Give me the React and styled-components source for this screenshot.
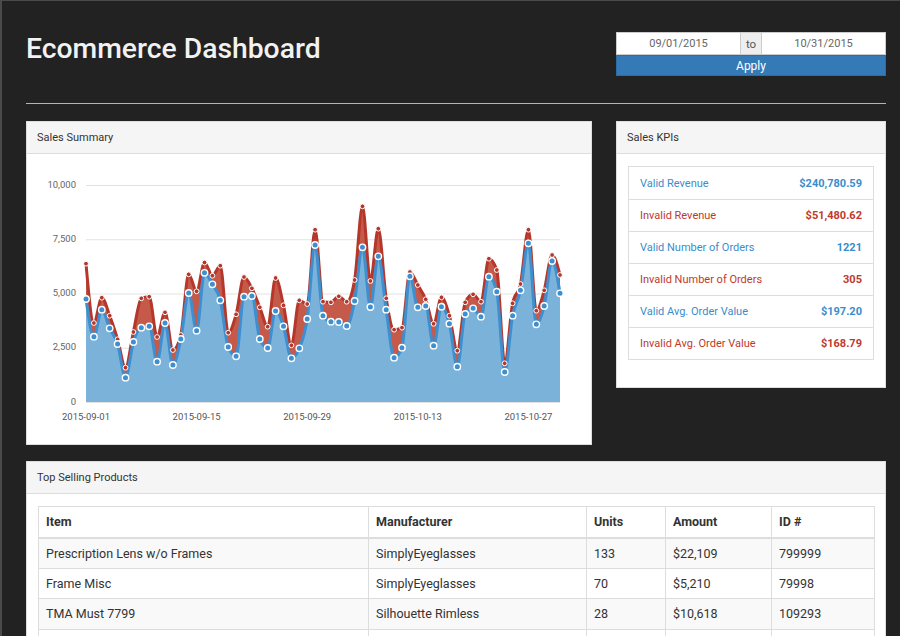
import React from "react";
import styled, { createGlobalStyle } from "styled-components";

const GlobalStyle = createGlobalStyle`
  html, body { margin: 0; padding: 0; overflow: hidden; background: #222222; }
  body { font-family: Roboto, "Liberation Sans", Arial, sans-serif; color: #333; }
  * { box-sizing: border-box; }
`;

const Page = styled.div`
  width: 900px;
  height: 636px;
  overflow: hidden;
  border-top: 1px solid #4a4a4a;
  border-left: 2px solid #4a4a4a;
  padding: 31px 0 0 24px;
`;

const Container = styled.div`
  width: 860px;
`;

const Header = styled.header`
  display: flex;
  justify-content: space-between;
  align-items: flex-start;
`;

const Title = styled.h1`
  margin: 0;
  font-size: 28.3px;
  line-height: 34px;
  font-weight: 500;
  color: #f2f2f2;
`;

const DateForm = styled.div`
  width: 270px;
  display: flex;
  flex-direction: column;
`;

const InputGroup = styled.div`
  display: flex;
  height: 23px;
`;

const DateInput = styled.div`
  flex: 1;
  background: #fff;
  border: 1px solid #ccc;
  display: flex;
  align-items: center;
  justify-content: center;
  font-size: 11px;
  color: #666;
`;

const Addon = styled.div`
  width: 20px;
  background: #eee;
  border-top: 1px solid #ccc;
  border-bottom: 1px solid #ccc;
  display: flex;
  align-items: center;
  justify-content: center;
  font-size: 11.5px;
  color: #555;
`;

const ApplyButton = styled.button`
  height: 21px;
  border: 1px solid #2e6da4;
  background: #337ab7;
  color: #fff;
  font-family: inherit;
  font-size: 12px;
  padding: 1px 0 0 0;
`;

const Rule = styled.hr`
  margin: 27px 0 17px 0;
  border: 0;
  border-top: 1px solid #b5b5b5;
  height: 0;
`;

const Row = styled.div`
  display: flex;
  gap: 24px;
  align-items: flex-start;
  margin-bottom: 16px;
`;

const Panel = styled.section`
  width: ${(p) => p.$width}px;
  background: #fff;
  border: 1px solid #ddd;
`;

const PanelHeading = styled.div`
  height: 32px;
  background: #f5f5f5;
  border-bottom: 1px solid #ddd;
  padding: 0 10px;
  display: flex;
  align-items: center;
  font-size: 11px;
  color: #333;
`;

const PanelBody = styled.div`
  padding: ${(p) => p.$pad || "0"};
  height: ${(p) => (p.$height ? p.$height + "px" : "auto")};
`;

const KpiList = styled.div`
  border: 1px solid #ddd;
  margin-bottom: 27px;
`;

const KpiRow = styled.div`
  height: 32px;
  display: flex;
  align-items: center;
  justify-content: space-between;
  padding: 0 11px;
  font-size: 11px;
  color: ${(p) => (p.$valid ? "#3a8dcc" : "#c0392b")};
  & + & { border-top: 1px solid #ddd; }
`;

const KpiValue = styled.span`
  font-weight: 700;
`;

const Table = styled.table`
  width: 836px;
  margin: 12px 0 0 11px;
  border-collapse: collapse;
  table-layout: fixed;
  font-size: 12.5px;
  color: #333;
`;

const Th = styled.th`
  text-align: left;
  font-weight: 700;
  height: 31px;
  padding: 0 7px;
  border: 1px solid #ddd;
  border-bottom: 2px solid #ddd;
`;

const Tr = styled.tr`
  background: ${(p) => (p.$striped ? "#f9f9f9" : "#fff")};
`;

const Td = styled.td`
  height: 30.5px;
  padding: 0 7px;
  border: 1px solid #ddd;
  white-space: nowrap;
`;

const valid = [4746,3009,4253,3396,2673,1120,2765,3424,3488,1857,3640,1705,2903,5023,3285,5954,5424,4686,2534,2106,4852,4884,2903,2488,4193,3488,2014,2474,3825,7235,3977,3700,3686,3502,4654,7129,4378,6714,4253,2041,2502,5792,4364,4424,2594,4391,3608,1627,4055,4318,3931,5774,5083,1382,3977,5147,7313,3580,4424,6497,5009];
const total = [6373,3640,4806,3977,2889,1581,3226,4779,4852,2995,4133,2396,3087,5884,5101,6428,5820,6281,3193,4041,5760,5239,4364,3470,5714,4456,2613,4686,4516,7940,4622,4594,4871,4622,5622,9018,5576,7986,4779,3332,3424,5990,5391,4732,3603,4825,3977,2364,4594,4963,4622,6603,6083,1783,4548,5437,7940,4207,5147,6774,5852];

const X0 = 59;
const STEP = 7.9;
const Y0 = 248;
const YS = 217 / 10000;
const sx = (i) => X0 + i * STEP;
const sy = (v) => Y0 - v * YS;

function monotone(pts) {
  const n = pts.length;
  const m = new Array(n).fill(0);
  const sign = (v) => (v < 0 ? -1 : 1);
  for (let i = 1; i < n - 1; i++) {
    const [x0, y0] = pts[i - 1];
    const [x1, y1] = pts[i];
    const [x2, y2] = pts[i + 1];
    const h0 = x1 - x0, h1 = x2 - x1;
    const s0 = (y1 - y0) / h0, s1 = (y2 - y1) / h1;
    const p = (s0 * h1 + s1 * h0) / (h0 + h1);
    m[i] = (sign(s0) + sign(s1)) * Math.min(Math.abs(s0), Math.abs(s1), 0.5 * Math.abs(p)) || 0;
  }
  const h = pts[1][0] - pts[0][0];
  m[0] = (3 * (pts[1][1] - pts[0][1]) / h - m[1]) / 2;
  const hl = pts[n - 1][0] - pts[n - 2][0];
  m[n - 1] = (3 * (pts[n - 1][1] - pts[n - 2][1]) / hl - m[n - 2]) / 2;
  let d = `M${pts[0][0]},${pts[0][1]}`;
  for (let i = 0; i < n - 1; i++) {
    const [x0, y0] = pts[i];
    const [x1, y1] = pts[i + 1];
    const dx = (x1 - x0) / 3;
    d += ` C${x0 + dx},${y0 + dx * m[i]} ${x1 - dx},${y1 - dx * m[i + 1]} ${x1},${y1}`;
  }
  return d;
}

function Series({ data, fill, stroke }) {
  const pts = data.map((v, i) => [sx(i), sy(v)]);
  const line = monotone(pts);
  const area = `${line} L${sx(data.length - 1)},${Y0} L${sx(0)},${Y0} Z`;
  return (
    <g>
      <path d={area} fill={fill} />
      <path d={line} fill="none" stroke={stroke} strokeWidth="3" strokeLinejoin="round" />
    </g>
  );
}

function Dots({ data, color, r, sw }) {
  return (
    <g>
      {data.map((v, i) => (
        <circle key={i} cx={sx(i)} cy={sy(v)} r={r} fill={color} stroke="#fff" strokeWidth={sw} />
      ))}
    </g>
  );
}

function SalesChart() {
  const ticks = [0, 2500, 5000, 7500, 10000];
  const xTicks = [
    [0, "2015-09-01"],
    [14, "2015-09-15"],
    [28, "2015-09-29"],
    [42, "2015-10-13"],
    [56, "2015-10-27"],
  ];
  return (
    <svg width="564" height="290" viewBox="0 0 564 290">
      {ticks.map((t) => (
        <g key={t}>
          <line x1={X0} x2={sx(60)} y1={sy(t) + 0.5} y2={sy(t) + 0.5} stroke="#e2e2e2" strokeWidth="1" />
          <text x="49" y={sy(t)} textAnchor="end" dominantBaseline="middle" fontSize="9.5" fill="#666" fontFamily="Roboto, sans-serif">
            {t.toLocaleString("en-US")}
          </text>
        </g>
      ))}
      <Series data={total} fill="#c55a4b" stroke="#b5372b" />
      <Series data={valid} fill="#7ab2d9" stroke="#3d8fd0" />
      <Dots data={total} color="#b5372b" r={2.4} sw={1} />
      <Dots data={valid} color="#3d8fd0" r={3.2} sw={1.4} />
      {xTicks.map(([i, label]) => (
        <text key={label} x={sx(i)} y="263" textAnchor="middle" dominantBaseline="middle" fontSize="9.5" fill="#555" fontFamily="Roboto, sans-serif">
          {label}
        </text>
      ))}
    </svg>
  );
}

const kpis = [
  ["Valid Revenue", "$240,780.59", true],
  ["Invalid Revenue", "$51,480.62", false],
  ["Valid Number of Orders", "1221", true],
  ["Invalid Number of Orders", "305", false],
  ["Valid Avg. Order Value", "$197.20", true],
  ["Invalid Avg. Order Value", "$168.79", false],
];

const products = [
  ["Prescription Lens w/o Frames", "SimplyEyeglasses", "133", "$22,109", "799999"],
  ["Frame Misc", "SimplyEyeglasses", "70", "$5,210", "79998"],
  ["TMA Must 7799", "Silhouette Rimless", "28", "$10,618", "109293"],
  ["", "", "", "", ""],
];

export default function App() {
  return (
    <>
      <GlobalStyle />
      <Page>
        <Container>
          <Header>
            <Title>Ecommerce Dashboard</Title>
            <DateForm>
              <InputGroup>
                <DateInput>09/01/2015</DateInput>
                <Addon>to</Addon>
                <DateInput>10/31/2015</DateInput>
              </InputGroup>
              <ApplyButton>Apply</ApplyButton>
            </DateForm>
          </Header>
          <Rule />
          <Row>
            <Panel $width={566}>
              <PanelHeading>Sales Summary</PanelHeading>
              <PanelBody $height={290}>
                <SalesChart />
              </PanelBody>
            </Panel>
            <Panel $width={270}>
              <PanelHeading>Sales KPIs</PanelHeading>
              <PanelBody $pad="12px 11px 0 11px">
                <KpiList>
                  {kpis.map(([label, value, ok]) => (
                    <KpiRow key={label} $valid={ok}>
                      <span>{label}</span>
                      <KpiValue>{value}</KpiValue>
                    </KpiRow>
                  ))}
                </KpiList>
              </PanelBody>
            </Panel>
          </Row>
          <Panel $width={860}>
            <PanelHeading>Top Selling Products</PanelHeading>
            <Table>
              <colgroup>
                <col style={{ width: 330 }} />
                <col style={{ width: 218 }} />
                <col style={{ width: 79 }} />
                <col style={{ width: 106 }} />
                <col style={{ width: 103 }} />
              </colgroup>
              <thead>
                <tr>
                  <Th>Item</Th>
                  <Th>Manufacturer</Th>
                  <Th>Units</Th>
                  <Th>Amount</Th>
                  <Th>ID #</Th>
                </tr>
              </thead>
              <tbody>
                {products.map((p, i) => (
                  <Tr key={i} $striped={i % 2 === 0}>
                    {p.map((c, j) => (
                      <Td key={j}>{c}</Td>
                    ))}
                  </Tr>
                ))}
              </tbody>
            </Table>
          </Panel>
        </Container>
      </Page>
    </>
  );
}
